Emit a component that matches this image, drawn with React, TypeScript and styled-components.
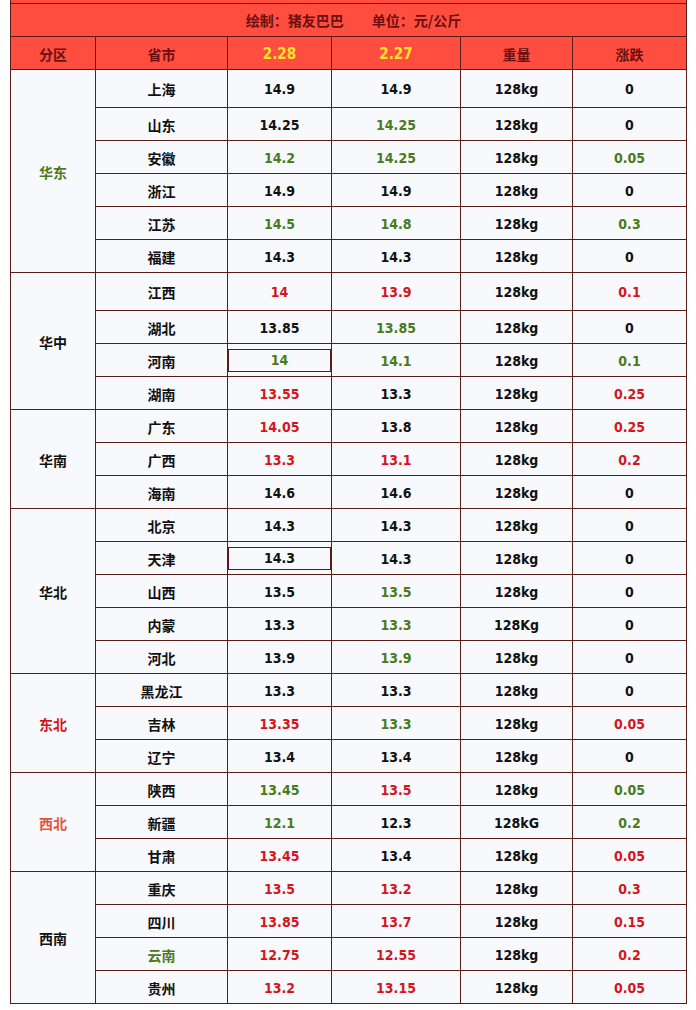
import React, { FC } from "react";
import styled, { createGlobalStyle } from "styled-components";

type Tone = "k" | "g" | "r" | "o";

const ink: Record<Tone, string> = {
    k: "#111111",
    g: "#4b7a1c",
    r: "#d3161e",
    o: "#e2543c",
};

const line = "#5a1c17";
const headBg = "#ff4d40";
const cellBg = "#f7f9fd";
const numFont = `"DejaVu Sans Condensed", "DejaVu Sans", "Noto Sans CJK SC", sans-serif`;

interface IRow {
    prov: string;
    a: string;
    b: string;
    w?: string;
    d: string;
    tones: string;
    provTone?: Tone;
    boxed?: boolean;
}

interface IGroup {
    name: string;
    tone: Tone;
    rows: IRow[];
}

const groups: IGroup[] = [
    { name: "华东", tone: "g", rows: [
        { prov: "上海", a: "14.9", b: "14.9", d: "0", tones: "kkk" },
        { prov: "山东", a: "14.25", b: "14.25", d: "0", tones: "kgk" },
        { prov: "安徽", a: "14.2", b: "14.25", d: "0.05", tones: "ggg" },
        { prov: "浙江", a: "14.9", b: "14.9", d: "0", tones: "kkk" },
        { prov: "江苏", a: "14.5", b: "14.8", d: "0.3", tones: "ggg" },
        { prov: "福建", a: "14.3", b: "14.3", d: "0", tones: "kkk" },
    ]},
    { name: "华中", tone: "k", rows: [
        { prov: "江西", a: "14", b: "13.9", d: "0.1", tones: "rrr" },
        { prov: "湖北", a: "13.85", b: "13.85", d: "0", tones: "kgk" },
        { prov: "河南", a: "14", b: "14.1", d: "0.1", tones: "ggg", boxed: true },
        { prov: "湖南", a: "13.55", b: "13.3", d: "0.25", tones: "rkr" },
    ]},
    { name: "华南", tone: "k", rows: [
        { prov: "广东", a: "14.05", b: "13.8", d: "0.25", tones: "rkr" },
        { prov: "广西", a: "13.3", b: "13.1", d: "0.2", tones: "rrr" },
        { prov: "海南", a: "14.6", b: "14.6", d: "0", tones: "kkk" },
    ]},
    { name: "华北", tone: "k", rows: [
        { prov: "北京", a: "14.3", b: "14.3", d: "0", tones: "kkk" },
        { prov: "天津", a: "14.3", b: "14.3", d: "0", tones: "kkk", boxed: true },
        { prov: "山西", a: "13.5", b: "13.5", d: "0", tones: "kgk" },
        { prov: "内蒙", a: "13.3", b: "13.3", w: "128Kg", d: "0", tones: "kgk" },
        { prov: "河北", a: "13.9", b: "13.9", d: "0", tones: "kgk" },
    ]},
    { name: "东北", tone: "r", rows: [
        { prov: "黑龙江", a: "13.3", b: "13.3", d: "0", tones: "kkk" },
        { prov: "吉林", a: "13.35", b: "13.3", d: "0.05", tones: "rgr" },
        { prov: "辽宁", a: "13.4", b: "13.4", d: "0", tones: "kkk" },
    ]},
    { name: "西北", tone: "o", rows: [
        { prov: "陕西", a: "13.45", b: "13.5", d: "0.05", tones: "grg" },
        { prov: "新疆", a: "12.1", b: "12.3", w: "128kG", d: "0.2", tones: "gkg" },
        { prov: "甘肃", a: "13.45", b: "13.4", d: "0.05", tones: "rkr" },
    ]},
    { name: "西南", tone: "k", rows: [
        { prov: "重庆", a: "13.5", b: "13.2", d: "0.3", tones: "rrr" },
        { prov: "四川", a: "13.85", b: "13.7", d: "0.15", tones: "rrr" },
        { prov: "云南", a: "12.75", b: "12.55", d: "0.2", tones: "rrr", provTone: "g" },
        { prov: "贵州", a: "13.2", b: "13.15", d: "0.05", tones: "rrr" },
    ]},
];

const GlobalStyle = createGlobalStyle`
    body {
        margin: 0;
        background: #ffffff;
    }
`;

const Page = styled.div`
    padding: 0 10px 0 10px;
    width: 677px;
`;

const Cap = styled.div`
    height: 3px;
    background: ${headBg};
    border-left: 1px solid ${line};
    border-right: 1px solid ${line};
`;

const Sheet = styled.div<{ rows: string }>`
    display: grid;
    grid-template-columns: 84px 131px 103px 128px 111px 113px;
    grid-template-rows: ${props => props.rows};
    gap: 1px;
    padding: 1px;
    background: ${line};
`;

const Cell = styled.div<{ tone?: Tone }>`
    display: flex;
    align-items: center;
    justify-content: center;
    background: ${cellBg};
    color: ${props => ink[props.tone || "k"]};
    font-family: ${numFont};
    font-weight: 700;
    font-size: 14px;
    padding-top: 1px;
`;

const ZhCell = styled(Cell)`
    font-family: "Noto Sans CJK SC", sans-serif;
    font-size: 14px;
`;

const RegionCell = styled(ZhCell)<{ span: number }>`
    grid-row: span ${props => props.span};
`;

const TitleCell = styled.div`
    grid-column: 1 / -1;
    display: flex;
    align-items: center;
    justify-content: center;
    gap: 28px;
    background: ${headBg};
    color: #6a1010;
    font-family: "Noto Sans CJK SC", sans-serif;
    font-weight: 700;
    font-size: 14px;
    padding-left: 10px;
`;

const HeadCell = styled.div<{ date?: boolean }>`
    display: flex;
    align-items: center;
    justify-content: center;
    background: ${headBg};
    color: ${props => props.date ? "#ffe82a" : "#6a1010"};
    font-family: ${props => props.date ? numFont : `"Noto Sans CJK SC", sans-serif`};
    font-weight: 700;
    font-size: ${props => props.date ? "15px" : "14px"};
    padding-top: 1px;
`;

const Boxed = styled.span`
    display: flex;
    align-items: center;
    justify-content: center;
    align-self: center;
    width: calc(100% - 2px);
    height: 21px;
    margin-top: -1px;
    border: 1px solid ${line};
`;

const tone = (row: IRow, i: number) => row.tones[i] as Tone;

const App: FC = () => {
    let heights = "32px 32px";
    groups.forEach((g, gi) => g.rows.forEach((_, ri) => {
        heights += ri === 0 && gi < 2 ? " 37px" : " 32px";
    }));

    return (
        <Page>
            <GlobalStyle />
            <Cap />
            <Sheet rows={heights}>
                <TitleCell>
                    <span>绘制：猪友巴巴</span>
                    <span>单位：元/公斤</span>
                </TitleCell>
                <HeadCell>分区</HeadCell>
                <HeadCell>省市</HeadCell>
                <HeadCell date>2.28</HeadCell>
                <HeadCell date>2.27</HeadCell>
                <HeadCell>重量</HeadCell>
                <HeadCell>涨跌</HeadCell>
                {groups.map(g => (
                    <React.Fragment key={g.name}>
                        <RegionCell span={g.rows.length} tone={g.tone}>{g.name}</RegionCell>
                        {g.rows.map(r => (
                            <React.Fragment key={r.prov}>
                                <ZhCell tone={r.provTone}>{r.prov}</ZhCell>
                                <Cell tone={tone(r, 0)}>
                                    {r.boxed ? <Boxed>{r.a}</Boxed> : r.a}
                                </Cell>
                                <Cell tone={tone(r, 1)}>{r.b}</Cell>
                                <Cell>{r.w || "128kg"}</Cell>
                                <Cell tone={tone(r, 2)}>{r.d}</Cell>
                            </React.Fragment>
                        ))}
                    </React.Fragment>
                ))}
            </Sheet>
        </Page>
    );
};

export default App;
